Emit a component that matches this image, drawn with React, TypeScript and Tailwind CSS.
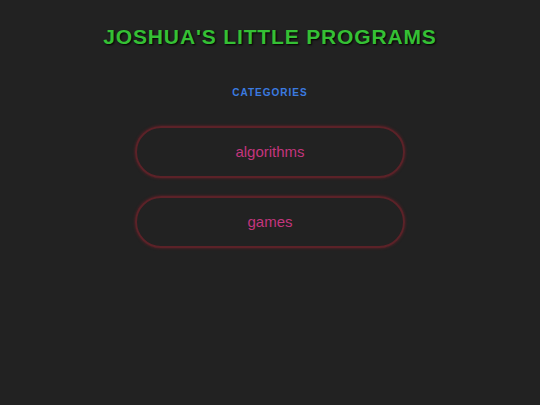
export default function App() {
  const categories = ["algorithms", "games"];
  return (
    <div className="min-h-screen bg-[#222222] flex flex-col items-center font-['Liberation_Sans',Arial,sans-serif]">
      <h1 className="mt-[24px] text-[21px] leading-[26px] font-bold tracking-[0.85px] text-[#35c035] [text-shadow:1px_1px_2px_#000]">
        JOSHUA'S LITTLE PROGRAMS
      </h1>
      <h2 className="mt-[37px] text-[10px] leading-[12px] font-bold tracking-[1px] text-[#3b7be0]">
        CATEGORIES
      </h2>
      <ul className="mt-[27px] flex flex-col gap-[18px]">
        {categories.map((c) => (
          <li key={c}>
            <a
              href="#"
              className="flex items-center justify-center w-[270px] h-[52px] rounded-full border-2 border-[#5c2228] shadow-[0_0_3px_#6a2028] text-[15px] text-[#c3357d]"
            >
              {c}
            </a>
          </li>
        ))}
      </ul>
    </div>
  );
}
